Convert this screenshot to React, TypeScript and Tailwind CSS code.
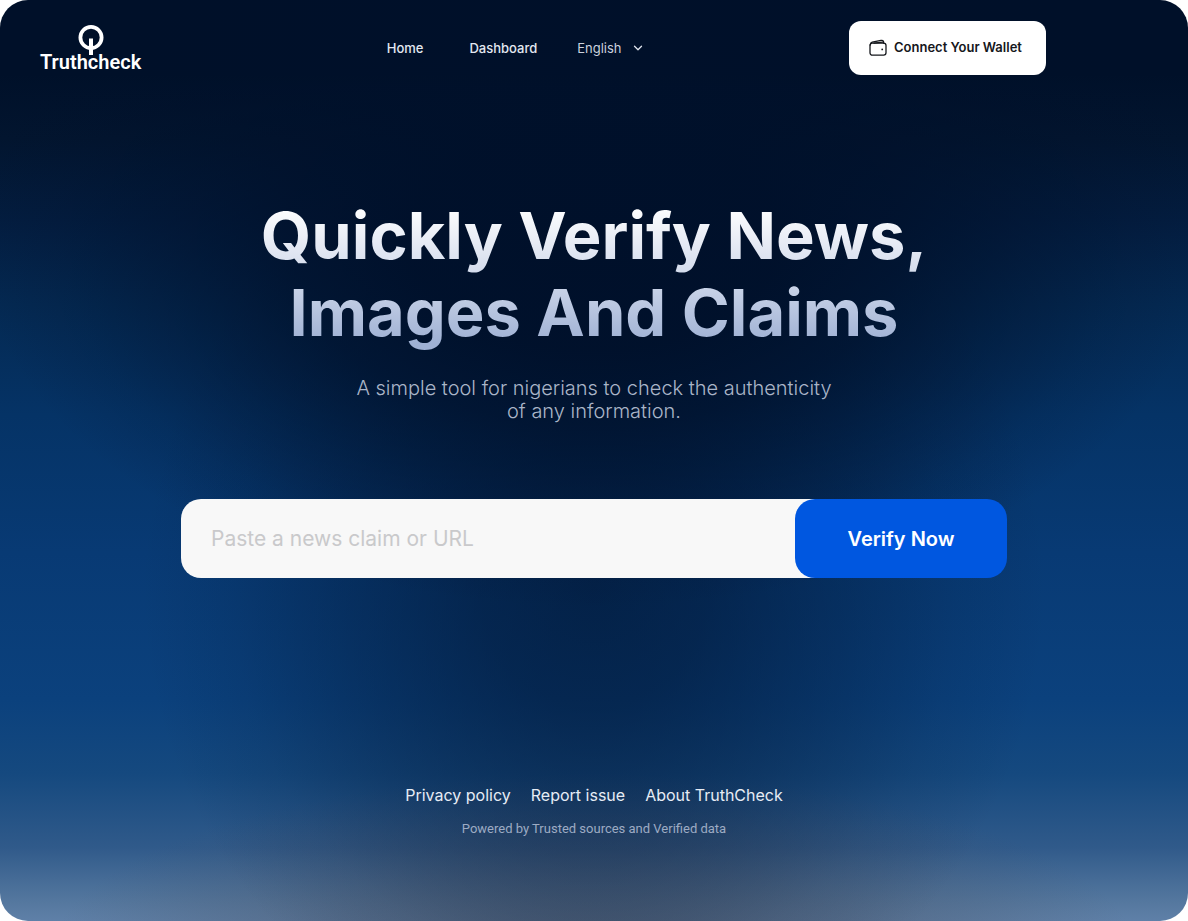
import { useState } from "react";

function Logo() {
  return (
    <a href="#home" className="flex w-fit flex-col items-center pt-1 text-white">
      <svg viewBox="0 0 28 32" className="h-8 w-7" fill="none" stroke="currentColor" aria-hidden="true">
        <circle cx="14" cy="13.5" r="10.6" strokeWidth="3.8" />
        <path d="M14 14.5V31" strokeWidth="4" />
      </svg>
      <span className="-mt-2 font-[Roboto,sans-serif] text-xl leading-7 font-semibold">Truthcheck</span>
    </a>
  );
}

function WalletIcon() {
  return (
    <svg
      viewBox="0 0 18 18"
      className="size-[18px] shrink-0"
      fill="none"
      stroke="currentColor"
      strokeWidth="1.3"
      strokeLinecap="round"
      strokeLinejoin="round"
      aria-hidden="true"
    >
      <rect x="1" y="4.2" width="16" height="12" rx="2.4" />
      <path d="M1.2 6C1.2 4.4 2 3.5 3.2 3.1L12 1.4C13.4 1.1 14.4 1.7 14.6 2.8V4.2" />
      <path d="M5 4.2l8.6-1" />
      <circle cx="13.2" cy="10.4" r=".9" fill="currentColor" stroke="none" />
    </svg>
  );
}

function Header() {
  return (
    <header className="grid grid-cols-[3fr_4fr_auto] items-center pt-5 pr-[142px] pl-10">
      <Logo />
      <nav className="flex items-center gap-[46px] text-[13px] leading-5 font-medium text-[#e3e8f1]">
        <a href="#home">Home</a>
        <div className="flex items-center gap-10">
          <a href="#dashboard">Dashboard</a>
          <div className="relative flex items-center">
            <select
              aria-label="Language"
              defaultValue="English"
              className="w-[66px] cursor-pointer appearance-none bg-transparent font-normal text-[#cbd2df] outline-none"
            >
              <option>English</option>
            </select>
            <svg
              viewBox="0 0 10 10"
              className="pointer-events-none absolute right-0 size-[10px]"
              fill="none"
              stroke="#dfe4ee"
              strokeWidth="1.3"
              strokeLinecap="round"
              strokeLinejoin="round"
              aria-hidden="true"
            >
              <path d="M1.5 3.2L5 6.7l3.5-3.5" />
            </svg>
          </div>
        </div>
      </nav>
      <button
        type="button"
        className="flex h-[54px] w-[197px] items-center gap-[7px] rounded-xl bg-white pl-5 text-[13px] font-semibold whitespace-nowrap text-[#15171c]"
      >
        <WalletIcon />
        Connect Your Wallet
      </button>
    </header>
  );
}

function VerifyForm() {
  const [claim, setClaim] = useState("");
  return (
    <form onSubmit={(event) => event.preventDefault()} className="mt-[76px] flex h-[79px] w-full max-w-[826px]">
      <input
        type="text"
        aria-label="News claim or URL"
        placeholder="Paste a news claim or URL"
        value={claim}
        onChange={(event) => setClaim(event.target.value)}
        className="-mr-6 min-w-0 flex-1 rounded-l-[20px] bg-[#f8f8f8] pr-12 pl-[30px] text-[21px] text-[#222] outline-none placeholder:text-[#c9c9cb]"
      />
      <button
        type="submit"
        className="relative w-[212px] shrink-0 rounded-[20px] bg-[#0057e0] text-xl font-semibold text-white"
      >
        Verify Now
      </button>
    </form>
  );
}

function Footer() {
  return (
    <footer className="mt-auto flex flex-col items-center pb-[82px]">
      <nav className="flex gap-5 text-base leading-6 text-[#e6ecf5]">
        <a href="#privacy">Privacy policy</a>
        <a href="#report">Report issue</a>
        <a href="#about">About TruthCheck</a>
      </nav>
      <p className="mt-3 font-[Roboto,sans-serif] text-[13px] leading-5 text-[#9dabc3]">
        Powered by Trusted sources and Verified data
      </p>
    </footer>
  );
}

export default function App() {
  return (
    <div className="min-h-screen bg-white font-['Inter',sans-serif]">
      <div className="flex min-h-screen flex-col rounded-[28px] bg-[radial-gradient(ellipse_52%_40%_at_50%_26%,#00102a_0%,#00102af2_30%,#00102abf_50%,#00102a66_70%,#00102a26_86%,#00102a00_100%),radial-gradient(ellipse_38%_52%_at_50%_64%,#011634b3_0%,#01163499_25%,#01163459_55%,#0116341f_80%,#01163400_100%),radial-gradient(ellipse_46%_20%_at_50%_104%,#485060b3_0%,#48506066_50%,#48506000_100%),linear-gradient(180deg,#001029_0%,#001029_8%,#02152f_15%,#031d40_24%,#042952_33%,#053366_45%,#083a74_60%,#0b417d_76%,#15497f_84%,#305a8a_92%,#55789f_98%,#5f80a8_100%)]">
        <Header />
        <main className="flex flex-col items-center px-6 pt-[121px] text-center">
          <h1 className="bg-linear-to-b from-white from-5% via-[#d3dbec] via-50% to-[#9fb1d4] to-95% bg-clip-text text-[65px] leading-[77px] font-bold text-transparent">
            Quickly Verify News,
            <br />
            Images And Claims
          </h1>
          <p className="mt-[26px] text-xl leading-[23px] font-light text-[#aab5c8]">
            A simple tool for nigerians to check the authenticity
            <br />
            of any information.
          </p>
          <VerifyForm />
        </main>
        <Footer />
      </div>
    </div>
  );
}
